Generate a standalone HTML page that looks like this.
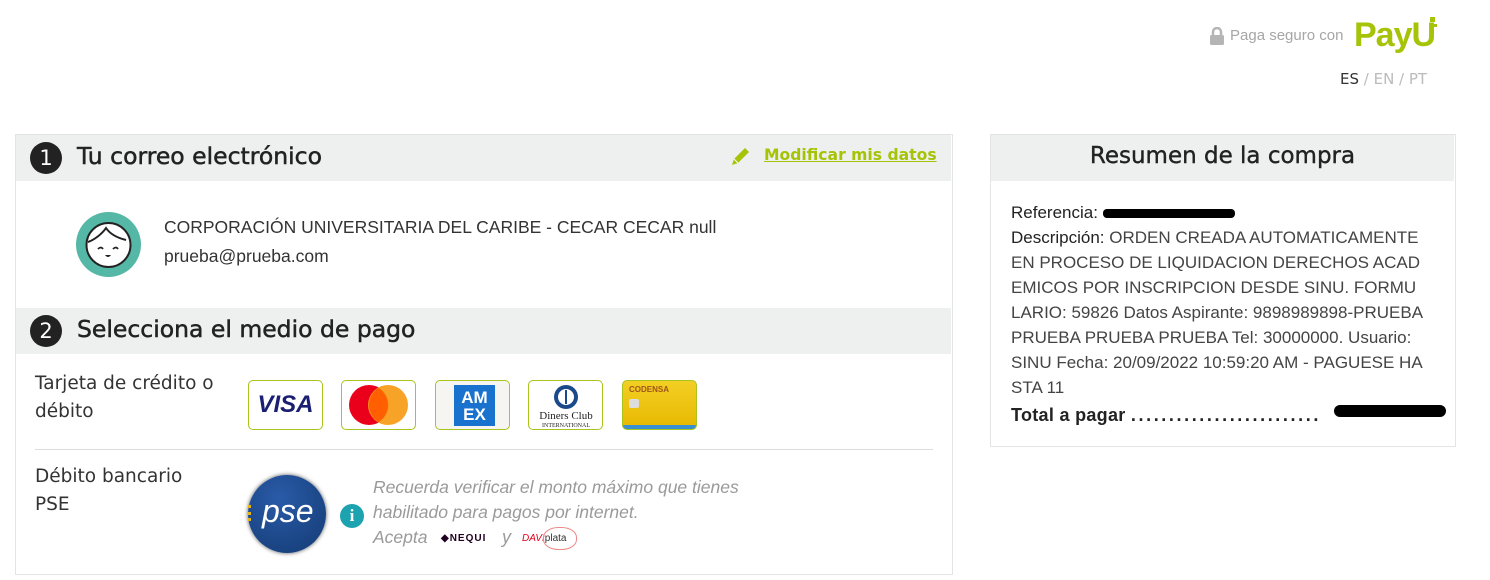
<!DOCTYPE html>
<html><head><meta charset="utf-8"><style>
body{margin:0;width:1490px;height:580px;background:#fff;font-family:"Liberation Sans",sans-serif;position:relative;overflow:hidden;color:#333}
.a{position:absolute;white-space:nowrap}
.panel{border:1px solid #e3e5e5;background:#fff}
.hdr{background:#eef0f0;height:46px}
.num{width:32px;height:32px;border-radius:50%;background:#222;color:#fff;font-size:21px;text-align:center;line-height:32px;font-family:"DejaVu Sans",sans-serif}
.h{color:#222;font-family:"DejaVu Sans","Liberation Sans",sans-serif;font-size:23.5px;-webkit-text-stroke:0.5px #222}
.card{width:73px;height:48px;border:1px solid #a8c41e;border-radius:5px;background:#fff;overflow:hidden}
.gray{color:#9a9a9a}
</style></head><body>
<div class="a" style="left:1209px;top:27px"><svg width="16" height="18"><path d="M4 8V5a4 4 0 0 1 8 0v3" stroke="#b5b5b5" stroke-width="2.5" fill="none"/><rect x="1" y="8" width="14" height="10" rx="1.5" fill="#b5b5b5"/></svg></div>
<div class="a" style="left:1230px;top:27px;font-size:15px;color:#a6a6a6">Paga seguro con</div>
<div class="a" style="left:1354px;top:16px;font-size:34px;font-weight:bold;color:#a6c307;letter-spacing:-1px">PayU</div>
<div class="a" style="left:1430px;top:17px;width:5px;height:5px;background:#a6c307"></div>
<div class="a" style="left:1434px;top:24px;width:3px;height:3px;background:#a6c307"></div>
<div class="a" style="left:1340px;top:70px;color:#bbb;font-family:'DejaVu Sans',sans-serif;font-size:15px"><span style="color:#333">ES</span> / EN / PT</div>

<div class="a panel" style="left:15px;top:134px;width:936px;height:439px"></div>
<div class="a hdr" style="left:16px;top:135px;width:935px"></div>
<div class="a num" style="left:30px;top:142px">1</div>
<div class="a h" style="left:77px;top:142px">Tu correo electrónico</div>
<div class="a" style="left:728px;top:145px"><svg width="24" height="24"><path d="M4 20l2-6 11-11 4 4-11 11z" fill="#a6c307"/><path d="M6 14l4 4" stroke="#fff" stroke-width="1"/></svg></div>
<div class="a" style="left:764px;top:146px;font-weight:bold;color:#a6c307;text-decoration:underline;font-family:'DejaVu Sans',sans-serif;font-size:15.6px">Modificar mis datos</div>
<div class="a" style="left:76px;top:212px"><svg width="65" height="65"><circle cx="32.5" cy="32.5" r="32.5" fill="#55b8a6"/><circle cx="32.5" cy="33" r="22" fill="#fff" stroke="#222" stroke-width="2"/><path d="M12 30c6-2 14-8 18-14 4 6 12 10 20 12" stroke="#222" stroke-width="2" fill="none"/><path d="M22 37q3-3 5 0M37 37q3-3 5 0" stroke="#222" stroke-width="1.8" fill="none"/><path d="M29 43q3 4 6 0z" fill="#222"/></svg></div>
<div class="a" style="left:164px;top:217px;font-size:17.5px;color:#333">CORPORACIÓN UNIVERSITARIA DEL CARIBE - CECAR CECAR null</div>
<div class="a" style="left:164px;top:246px;font-size:17.5px;color:#333">prueba@prueba.com</div>

<div class="a hdr" style="left:16px;top:308px;width:935px"></div>
<div class="a num" style="left:30px;top:315px">2</div>
<div class="a h" style="left:77px;top:315px">Selecciona el medio de pago</div>
<div class="a" style="left:35px;top:370px;line-height:28px;color:#333;font-family:'DejaVu Sans',sans-serif;font-size:18.5px">Tarjeta de crédito o<br>débito</div>
<div class="a card" style="left:248px;top:380px"><div style="font:italic bold 24px 'Liberation Sans';color:#1a1f71;text-align:center;line-height:48px">VISA</div></div>
<div class="a card" style="left:341px;top:380px"><svg width="73" height="48"><circle cx="27" cy="24" r="20" fill="#eb001b"/><circle cx="46" cy="24" r="20" fill="#f79e1b" opacity=".95"/><path d="M36.5 7a20 20 0 0 1 0 34a20 20 0 0 1 0-34z" fill="#ff5f00"/></svg></div>
<div class="a card" style="left:435px;top:380px;background:#f7f5f2"><div style="position:absolute;left:18px;top:4px;width:41px;height:41px;background:#1a72cf;color:#fff;font:bold 17px 'Liberation Sans';line-height:17px;text-align:center;padding-top:4px;box-sizing:border-box">AM<br>EX</div></div>
<div class="a card" style="left:528px;top:380px"><svg width="73" height="48"><circle cx="37" cy="16" r="12" fill="#1a4a8a"/><circle cx="37" cy="16" r="8" fill="#fff"/><rect x="36" y="9" width="2" height="14" fill="#1a4a8a"/><text x="37" y="38" font-size="11" font-family="Liberation Serif" text-anchor="middle" fill="#222">Diners Club</text><text x="37" y="46" font-size="6" font-family="Liberation Serif" text-anchor="middle" fill="#222">INTERNATIONAL</text></svg></div>
<div class="a card" style="left:622px;top:380px;background:linear-gradient(#f2cf24,#e8b800)"><div style="font:bold 8px 'Liberation Sans';color:#a0541b;padding:4px 6px">CODENSA</div><div style="position:absolute;left:6px;top:18px;width:10px;height:9px;background:#ddd;border-radius:2px"></div><div style="position:absolute;left:0;bottom:0;width:73px;height:4px;background:#3a8fd0"></div></div>
<div class="a" style="left:35px;top:449px;width:898px;height:1px;background:#ddd"></div>
<div class="a" style="left:35px;top:463px;font-family:'DejaVu Sans',sans-serif;font-size:18.5px;line-height:28px;color:#333">Débito bancario<br>PSE</div>
<div class="a" style="left:248px;top:475px;width:78px;height:78px;border-radius:50%;background:radial-gradient(circle at 40% 30%,#2a5ba8,#133a73);box-shadow:0 0 4px #555"><div style="position:absolute;left:14px;top:18px;font:italic 32px 'Liberation Sans';color:#fff">pse</div><div style="position:absolute;left:0;top:30px;width:14px;height:16px;border-left:3px dotted #e5b618"></div></div>
<div class="a" style="left:340px;top:504px;width:24px;height:24px;border-radius:50%;background:#1da3b0;color:#fff;font:bold 17px 'Liberation Serif';text-align:center;line-height:24px">i</div>
<div class="a gray" style="left:373px;top:475px;font-size:17.5px;font-style:italic;line-height:25px">Recuerda verificar el monto máximo que tienes<br>habilitado para pagos por internet.<br>Acepta</div>
<div class="a" style="left:441px;top:533px;font:bold 10px 'Liberation Sans';color:#200020;letter-spacing:1px">◆NEQUI</div>
<div class="a gray" style="left:502px;top:527px;font-size:18px;font-style:italic">y</div>
<div class="a" style="left:522px;top:533px;font-size:10px;color:#e0001a"><span style="font-style:italic">DAVI</span><span style="color:#333">plata</span></div>
<div class="a" style="left:543px;top:527px;width:32px;height:21px;border:1px solid #e88;border-radius:45%"></div>

<div class="a panel" style="left:990px;top:134px;width:464px;height:311px"></div>
<div class="a hdr" style="left:991px;top:135px;width:463px"></div>
<div class="a" style="left:991px;top:143px;width:463px;text-align:center;font-family:'DejaVu Sans',sans-serif;font-size:23px;color:#222;-webkit-text-stroke:0.4px #222">Resumen de la compra</div>
<div class="a" style="left:1011px;top:200px;font-size:17px;line-height:25px;color:#444"><span style="color:#222">Referencia:</span> <span style="display:inline-block;width:132px;height:9px;background:#000;border-radius:4px;vertical-align:middle"></span><br><span style="color:#222">Descripción:</span> ORDEN CREADA AUTOMATICAMENTE<br>EN PROCESO DE LIQUIDACION DERECHOS ACAD<br>EMICOS POR INSCRIPCION DESDE SINU. FORMU<br>LARIO: 59826 Datos Aspirante: 9898989898-PRUEBA<br>PRUEBA PRUEBA PRUEBA Tel: 30000000. Usuario:<br>SINU Fecha: 20/09/2022 10:59:20 AM - PAGUESE HA<br>STA 11</div>
<div class="a" style="left:1011px;top:405px;font-size:18px;font-weight:bold;color:#222;letter-spacing:0.3px">Total a pagar <span style="letter-spacing:2.6px">.........................</span></div>
<div class="a" style="left:1334px;top:405px;width:112px;height:12px;background:#000;border-radius:6px"></div>
</body></html>
